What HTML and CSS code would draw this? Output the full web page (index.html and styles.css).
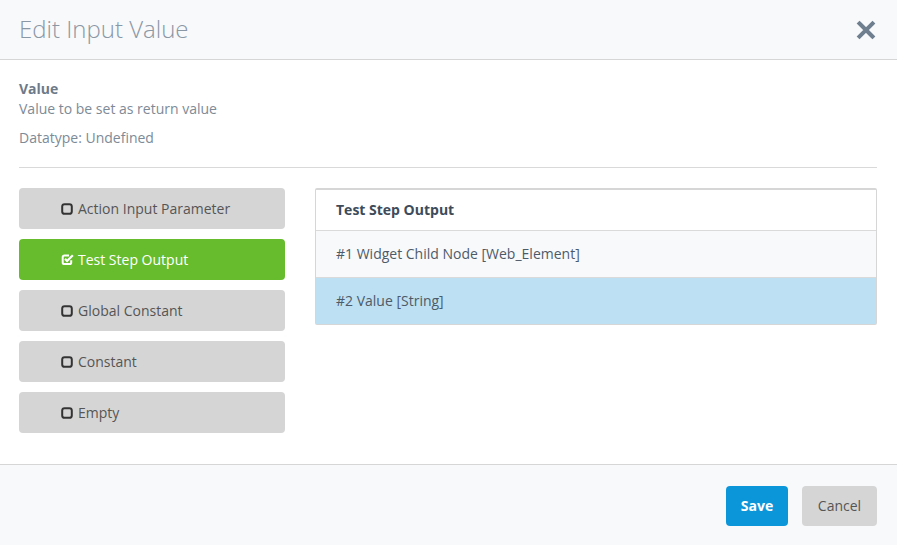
FILE: index.html
```html
<!DOCTYPE html>
<html>
<head>
<meta charset="utf-8">
<link rel="stylesheet" href="styles.css">
</head>
<body>
<div class="dialog">
  <header class="dlg-header">
    <h1 class="dlg-title">Edit Input Value</h1>
    <svg class="close" viewBox="0 0 20 20" width="20" height="20"><path d="M3.5 3.5 L16.5 16.5 M16.5 3.5 L3.5 16.5" stroke="#6f7f90" stroke-width="4" stroke-linecap="square"/></svg>
  </header>
  <main class="dlg-body">
    <div class="field-name">Value</div>
    <div class="field-desc">Value to be set as return value</div>
    <div class="field-type">Datatype: Undefined</div>
    <hr class="sep">
    <div class="content">
      <div class="options">
        <div class="opt"><svg class="ico" viewBox="0 0 12 12"><rect x="1.2" y="1.2" width="9.6" height="9.6" rx="2.4" fill="none" stroke="#333" stroke-width="2"/></svg>Action Input Parameter</div>
        <div class="opt active"><svg class="ico ico-check" viewBox="0 0 13 13"><path d="M10.2 7.2 V9.4 a1.7 1.7 0 0 1 -1.7 1.7 H3.4 a1.7 1.7 0 0 1 -1.7 -1.7 V4.1 a1.7 1.7 0 0 1 1.7 -1.7 H8" fill="none" stroke="#fff" stroke-width="2"/><path d="M4 5.9 L6.1 8 L11.8 2.3" fill="none" stroke="#fff" stroke-width="2.2"/></svg>Test Step Output</div>
        <div class="opt"><svg class="ico" viewBox="0 0 12 12"><rect x="1.2" y="1.2" width="9.6" height="9.6" rx="2.4" fill="none" stroke="#333" stroke-width="2"/></svg>Global Constant</div>
        <div class="opt"><svg class="ico" viewBox="0 0 12 12"><rect x="1.2" y="1.2" width="9.6" height="9.6" rx="2.4" fill="none" stroke="#333" stroke-width="2"/></svg>Constant</div>
        <div class="opt"><svg class="ico" viewBox="0 0 12 12"><rect x="1.2" y="1.2" width="9.6" height="9.6" rx="2.4" fill="none" stroke="#333" stroke-width="2"/></svg>Empty</div>
      </div>
      <div class="table">
        <div class="th">Test Step Output</div>
        <div class="tr">#1 Widget Child Node [Web_Element]</div>
        <div class="tr selected">#2 Value [String]</div>
      </div>
    </div>
  </main>
  <footer class="dlg-footer">
    <button class="btn save">Save</button>
    <button class="btn cancel">Cancel</button>
  </footer>
</div>
</body>
</html>
```
FILE: styles.css
```css
html, body {
  margin: 0;
  padding: 0;
  background: #fff;
}
body {
  font-family: "Open Sans", "Noto Sans", sans-serif;
  font-size: 14px;
  width: 897px;
  height: 545px;
  overflow: hidden;
}
.dialog {
  display: flex;
  flex-direction: column;
  height: 545px;
}
.dlg-header {
  height: 59px;
  background: #f8f9fb;
  border-bottom: 1px solid #d6d6d6;
  display: flex;
  align-items: center;
  justify-content: space-between;
  padding: 0 21px 0 19px;
  flex: none;
}
.dlg-title {
  margin: 0;
  font-size: 24px;
  font-weight: 300;
  color: #8a97a5;
  line-height: 30px;
  padding-bottom: 1px;
}
.close {
  display: block;
  margin-top: 1px;
}
.dlg-body {
  flex: 1;
  padding: 19px 20px 0 19px;
  color: #7d8a97;
  line-height: 20px;
}
.field-name {
  font-weight: 700;
  color: #6d7a88;
}
.field-type {
  margin-top: 9px;
}
.sep {
  margin: 19px 0 0 0;
  border: 0;
  border-top: 1px solid #d9d9d9;
  height: 0;
}
.content {
  display: flex;
  gap: 30px;
  margin-top: 20px;
}
.options {
  width: 266px;
  display: flex;
  flex-direction: column;
  gap: 10px;
  flex: none;
}
.opt {
  height: 41px;
  background: #d5d5d5;
  border-radius: 4px;
  display: flex;
  align-items: center;
  padding-left: 42px;
  color: #555;
  line-height: 20px;
}
.opt.active {
  background: #67bc2d;
  color: #fff;
}
.ico {
  width: 12px;
  height: 12px;
  margin-right: 5px;
  flex: none;
}
.ico-check {
  width: 13px;
  height: 13px;
  margin-right: 4px;
}
.table {
  flex: 1;
  border: 1px solid #d6d6d6;
  border-top-width: 2px;
  border-radius: 2px;
  align-self: flex-start;
}
.th {
  height: 40px;
  display: flex;
  align-items: center;
  padding-left: 20px;
  font-weight: 700;
  color: #3d4b5a;
  border-bottom: 1px solid #dadada;
}
.tr {
  height: 46px;
  display: flex;
  align-items: center;
  padding-left: 20px;
  color: #4d5b69;
  background: #f8f9fb;
  border-bottom: 1px solid #dadada;
}
.tr.selected {
  background: #bde0f2;
  border-bottom: 0;
}
.dlg-footer {
  height: 80px;
  flex: none;
  background: #f8f9fb;
  border-top: 1px solid #d6d6d6;
  display: flex;
  align-items: center;
  justify-content: flex-end;
  gap: 14px;
  padding-right: 20px;
}
.btn {
  font-family: "Open Sans", "Noto Sans", sans-serif;
  font-size: 14px;
  height: 40px;
  border: 0;
  border-radius: 4px;
  padding: 0;
  margin-top: 1px;
}
.save {
  width: 62px;
  background: #0c96da;
  color: #fff;
  font-weight: 700;
}
.cancel {
  width: 75px;
  background: #d5d5d5;
  color: #555;
}
```
